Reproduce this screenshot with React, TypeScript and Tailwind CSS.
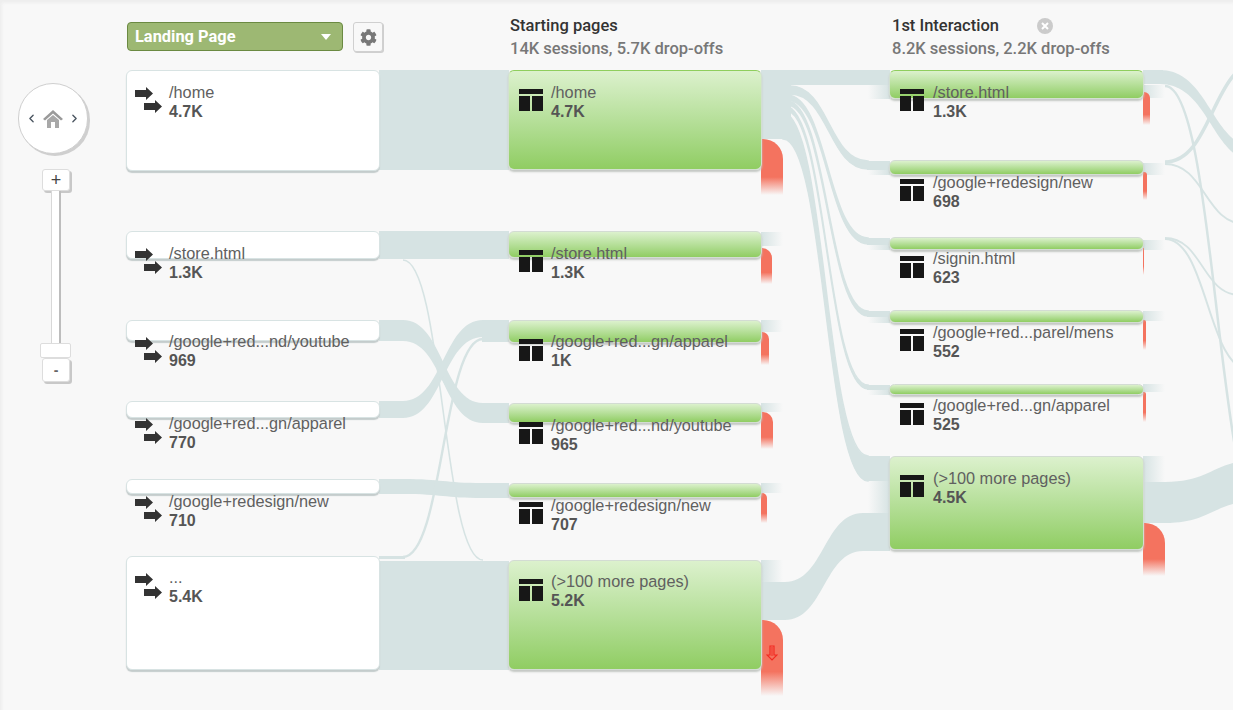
import { FaCog } from "react-icons/fa";
import { ChevronLeft, ChevronRight } from "lucide-react";

type Flow = [number, number, number, number, number, number];

interface NodeItem {
  x: number;
  y: number;
  h: number;
  label: string;
  value: string;
  lineTop?: boolean;
  dy?: number;
}

const FLOW_COLOR = "#d6e3e3";

const landing: NodeItem[] = [
  { x: 126, y: 70, h: 101, label: "/home", value: "4.7K" },
  { x: 126, y: 231, h: 28, label: "/store.html", value: "1.3K" },
  { x: 126, y: 320, h: 21, label: "/google+red...nd/youtube", value: "969", dy: -1 },
  { x: 126, y: 401, h: 17, label: "/google+red...gn/apparel", value: "770" },
  { x: 126, y: 479, h: 15, label: "/google+redesign/new", value: "710" },
  { x: 126, y: 556, h: 114, label: "...", value: "5.4K", dy: -1 },
];

const starting: NodeItem[] = [
  { x: 508, y: 70, h: 100, label: "/home", value: "4.7K", lineTop: true },
  { x: 508, y: 231, h: 27, label: "/store.html", value: "1.3K" },
  { x: 508, y: 320, h: 23, label: "/google+red...gn/apparel", value: "1K", dy: -1 },
  { x: 508, y: 403, h: 20, label: "/google+red...nd/youtube", value: "965" },
  { x: 508, y: 483, h: 15, label: "/google+redesign/new", value: "707" },
  { x: 508, y: 560, h: 110, label: "(>100 more pages)", value: "5.2K", dy: -1 },
];

const interaction: NodeItem[] = [
  { x: 889, y: 70, h: 29, label: "/store.html", value: "1.3K", lineTop: true },
  { x: 889, y: 160, h: 15, label: "/google+redesign/new", value: "698" },
  { x: 889, y: 237, h: 13, label: "/signin.html", value: "623", dy: -1 },
  { x: 889, y: 310, h: 13, label: "/google+red...parel/mens", value: "552" },
  { x: 889, y: 384, h: 11, label: "/google+red...gn/apparel", value: "525", dy: -1 },
  { x: 889, y: 456, h: 94, label: "(>100 more pages)", value: "4.5K" },
];

// x1, y1, h1, x2, y2, h2
const bands: Flow[] = [
  [379, 70, 100, 509, 70, 100],
  [379, 231, 28, 509, 231, 28],
  [403, 320, 21, 483, 403, 20],
  [403, 401, 17, 483, 320, 17],
  [403, 479, 15, 483, 483, 15],
  [761, 70, 15, 890, 70, 15],
  [790, 86, 8, 868, 161, 8],
  [787, 95, 5, 868, 238, 6],
  [787, 101, 4, 868, 311, 5],
  [785, 106, 4, 868, 385, 4],
  [783, 113, 26, 868, 456, 25],
  [785, 582, 38, 863, 513, 38],
  [1160, 70, 14, 1262, 150, 14],
  [1165, 482, 41, 1260, 460, 41],
];

const lines: [number, number, number, number, number][] = [
  [403, 260, 483, 560, 1.6],
  [403, 557, 483, 339, 2.4],
  [1165, 86, 1268, 530, 2.5],
  [1165, 162, 1260, 62, 3.5],
  [1165, 164, 1245, 224, 2],
  [1165, 238, 1240, 295, 1.8],
  [1165, 239, 1250, 370, 2],
];

// green node drop-offs: x, y, width, height
const drops = [
  [761, 139, 22, 56, "rounded-tr-[20px]"],
  [761, 248, 11, 36, "rounded-tr-[10px]"],
  [761, 332, 8, 33, "rounded-tr-[7px]"],
  [761, 412, 12, 37, "rounded-tr-[10px]"],
  [761, 493, 6, 30, "rounded-tr-[5px]"],
  [761, 620, 22, 76, "rounded-tr-[20px]"],
  [1143, 92, 7, 33, "rounded-tr-[6px]"],
  [1143, 172, 4, 28, "rounded-tr-[3px]"],
  [1143, 248, 1, 27, ""],
  [1143, 320, 3, 30, "rounded-tr-[2px]"],
  [1143, 392, 3, 30, "rounded-tr-[2px]"],
  [1143, 523, 22, 53, "rounded-tr-[20px]"],
] as const;

// fading stubs on the exit side of a node
const exits = [
  [761, 232, 14],
  [761, 320, 12],
  [761, 403, 9],
  [761, 483, 10],
  [761, 560, 22],
  [1143, 85, 13],
  [1143, 163, 12],
  [1143, 240, 10],
  [1143, 311, 10],
  [1143, 384, 8],
  [1143, 456, 26],
];

// fading stubs on the entry side of a node
const entries = [
  [85, 14],
  [170, 5],
  [245, 5],
  [317, 6],
  [390, 5],
  [481, 32],
];

function bandPath([x1, y1, h1, x2, y2, h2]: Flow) {
  const mx = (x1 + x2) / 2;
  return `M${x1} ${y1}C${mx} ${y1} ${mx} ${y2} ${x2} ${y2}V${y2 + h2}C${mx} ${y2 + h2} ${mx} ${y1 + h1} ${x1} ${y1 + h1}Z`;
}

function ArrowsIcon() {
  return (
    <svg width="27" height="27" viewBox="0 0 27 27" className="shrink-0">
      <path d="M0 3H11V0L18 6.5L11 13V10H0Z" fill="#333" />
      <path d="M9 16H20V13L27 19.5L20 26V23H9Z" fill="#333" />
    </svg>
  );
}

function PageIcon() {
  return (
    <svg width="24" height="22" viewBox="0 0 24 22" className="shrink-0">
      <rect width="24" height="5" fill="#171717" />
      <rect y="7" width="11" height="15" fill="#171717" />
      <rect x="13" y="7" width="11" height="15" fill="#171717" />
    </svg>
  );
}

function NodeText({ node }: { node: NodeItem }) {
  return (
    <div
      className="text-[16.3px] leading-[19px] text-[#606060] whitespace-nowrap font-['Liberation_Sans',sans-serif]"
      style={{ marginTop: 12 + (node.dy ?? 0) }}
    >
      <div>{node.label}</div>
      <div className="text-[16px] font-bold text-[#555]">{node.value}</div>
    </div>
  );
}

function LandingNode({ node }: { node: NodeItem }) {
  return (
    <div
      className="absolute w-[254px] bg-white rounded-[6px] border border-[#d8e3e3] shadow-[0_2px_1px_#c4cccc]"
      style={{ left: node.x, top: node.y, height: node.h }}
    >
      <div className="flex">
        <div className="ml-[8px] mt-[16px] w-[34px]">
          <ArrowsIcon />
        </div>
        <NodeText node={node} />
      </div>
    </div>
  );
}

function GreenNode({ node }: { node: NodeItem }) {
  const last = node.x > 800;
  return (
    <div
      className={`absolute rounded-[6px] border bg-linear-to-b from-[#dcf1cd] to-[#90cd62] shadow-[0_2px_2px_#c4c8c4] ${
        last ? "w-[255px]" : "w-[254px]"
      } ${node.lineTop ? "border-[#d3e0d0] border-t-[#8fce5d]" : "border-[#d3dcd3]"}`}
      style={{ left: node.x, top: node.y, height: node.h }}
    >
      <div className="flex">
        <div className={`ml-[10px] mt-[18px] ${last ? "w-[33px]" : "w-[32px]"}`}>
          <PageIcon />
        </div>
        <NodeText node={node} />
      </div>
    </div>
  );
}

function Diagram() {
  return (
    <div className="absolute inset-0">
      <svg width="1233" height="710" className="absolute inset-0">
        {bands.map((b, i) => (
          <path key={i} d={bandPath(b)} fill={FLOW_COLOR} stroke={FLOW_COLOR} strokeWidth={i >= 6 && i <= 10 ? 1.5 : 0} />
        ))}
        <rect x="379" y="561" width="130" height="109" fill={FLOW_COLOR} />
        <rect x="379" y="320" width="25" height="21" fill={FLOW_COLOR} />
        <rect x="379" y="401" width="25" height="17" fill={FLOW_COLOR} />
        <rect x="379" y="479" width="25" height="15" fill={FLOW_COLOR} />
        <rect x="482" y="403" width="27" height="20" fill={FLOW_COLOR} />
        <rect x="482" y="320" width="27" height="17" fill={FLOW_COLOR} />
        <rect x="482" y="483" width="27" height="15" fill={FLOW_COLOR} />
        <rect x="482" y="337" width="27" height="5" fill={FLOW_COLOR} />
        <rect x="379" y="556" width="26" height="3" fill={FLOW_COLOR} />
        <rect x="761" y="85" width="30" height="54" fill={FLOW_COLOR} />
        <rect x="761" y="582" width="25" height="38" fill={FLOW_COLOR} />
        <rect x="862" y="513" width="28" height="38" fill={FLOW_COLOR} />
        <rect x="867" y="161" width="23" height="9" fill={FLOW_COLOR} />
        <rect x="867" y="238" width="23" height="7" fill={FLOW_COLOR} />
        <rect x="867" y="311" width="23" height="6" fill={FLOW_COLOR} />
        <rect x="867" y="385" width="23" height="5" fill={FLOW_COLOR} />
        <rect x="867" y="456" width="23" height="25" fill={FLOW_COLOR} />
        <rect x="1143" y="70" width="20" height="14" fill={FLOW_COLOR} />
        <rect x="1143" y="482" width="23" height="41" fill={FLOW_COLOR} />
        {lines.map(([x1, y1, x2, y2, w], i) => {
          const mx = (x1 + x2) / 2;
          return (
            <path
              key={i}
              d={`M${x1} ${y1}C${mx} ${y1} ${mx} ${y2} ${x2} ${y2}`}
              fill="none"
              stroke={FLOW_COLOR}
              strokeWidth={w}
            />
          );
        })}
      </svg>

      {exits.map(([x, y, h], i) => (
        <div
          key={i}
          className="absolute w-[22px] bg-linear-to-r from-[#d6e3e3] to-transparent"
          style={{ left: x, top: y, height: h }}
        />
      ))}
      {entries.map(([y, h], i) => (
        <div
          key={i}
          className="absolute left-[868px] w-[22px] bg-linear-to-l from-[#d6e3e3] to-transparent"
          style={{ top: y, height: h }}
        />
      ))}
      {drops.map(([x, y, w, h, round], i) => (
        <div
          key={i}
          className={`absolute bg-[linear-gradient(to_bottom,#f4735f_0%,#f4735f_68%,rgba(244,115,95,0)_100%)] ${round}`}
          style={{ left: x, top: y, width: w, height: h }}
        />
      ))}

      {landing.map((n) => (
        <LandingNode key={n.y} node={n} />
      ))}
      {starting.map((n) => (
        <GreenNode key={n.y} node={n} />
      ))}
      {interaction.map((n) => (
        <GreenNode key={n.y} node={n} />
      ))}

      <svg width="12" height="16" viewBox="0 0 12 16" className="absolute left-[766px] top-[645px]">
        <path d="M4 1H8V10H11L6 15L1 10H4Z" fill="#f4735f" stroke="#f22a22" strokeWidth="1.2" />
        <path d="M6 2V11" stroke="#f22a22" strokeWidth="1" />
      </svg>
    </div>
  );
}

function ZoomControls() {
  return (
    <div className="relative z-10 pl-[18px] pt-[83px] w-[127px] shrink-0">
      <div className="w-[70px] h-[71px] rounded-full bg-white border border-[#cfcfcf] shadow-[2px_2px_0_#cfcfcf] flex items-center justify-center">
        <ChevronLeft size={13} strokeWidth={2.5} color="#4a5560" />
        <svg width="20" height="18" viewBox="0 0 20 18" className="mx-[5px]">
          <path d="M10 0L20 9L18 10.5L10 3.5L2 10.5L0 9Z" fill="#9a9a9a" />
          <path d="M4 10L10 5L16 10V18H12V12H8V18H4Z" fill="#a8a8a8" />
        </svg>
        <ChevronRight size={13} strokeWidth={2.5} color="#4a5560" />
      </div>
      <div className="mt-[15px] ml-[24px] w-[28px] h-[22px] bg-white rounded-[3px] border border-[#ddd] shadow-[2px_2px_0_#c8c8c8] flex items-center justify-center text-[18px] leading-none text-[#444] font-['Liberation_Sans',sans-serif]">
        +
      </div>
      <div className="ml-[33px] w-[10px] h-[152px] bg-white border-x border-l-[#d8d8d8] border-r-[#bdbdbd] border-r-2" />
      <div className="ml-[22px] w-[31px] h-[15px] bg-white rounded-[2px] border border-[#ddd]" />
      <div className="ml-[24px] w-[28px] h-[24px] bg-white rounded-[3px] border border-[#ddd] shadow-[2px_2px_0_#c8c8c8] flex items-center justify-center text-[14px] font-bold leading-none text-[#666] font-['Liberation_Sans',sans-serif]">
        -
      </div>
    </div>
  );
}

function ColumnHeader({ title, sub }: { title: string; sub: string }) {
  return (
    <div className="font-['Roboto',sans-serif] font-medium text-[16.5px] leading-[23px] whitespace-nowrap">
      <div className="text-[#333]">{title}</div>
      <div className="text-[#777]">{sub}</div>
    </div>
  );
}

function Headers() {
  return (
    <div className="relative z-10 flex h-[60px] font-['Roboto',sans-serif]">
      <div className="w-[383px] shrink-0 pt-[22px] flex items-start">
        <div className="w-[216px] h-[29px] bg-[#9db873] border border-[#6b8a42] rounded-[4px] flex items-center justify-between pl-[7px] pr-[11px] pt-px text-white text-[16.4px] font-bold">
          Landing Page
          <div className="w-0 h-0 border-x-[5px] border-x-transparent border-t-[6px] border-t-white" />
        </div>
        <div className="ml-[10px] w-[30px] h-[30px] bg-[#f8f8f8] border border-[#d0d0d0] rounded-[3px] shadow-[1px_1px_0_#cfcfcf] flex items-center justify-center">
          <FaCog size={17} color="#777" />
        </div>
      </div>
      <div className="w-[382px] shrink-0 pt-[14px]">
        <ColumnHeader title="Starting pages" sub="14K sessions, 5.7K drop-offs" />
      </div>
      <div className="relative pt-[14px]">
        <ColumnHeader title="1st Interaction" sub="8.2K sessions, 2.2K drop-offs" />
        <svg width="16" height="16" viewBox="0 0 16 16" className="absolute left-[145px] top-[18px]">
          <circle cx="8" cy="8" r="8" fill="#cbcbcb" />
          <path d="M5 5L11 11M11 5L5 11" stroke="#fff" strokeWidth="2" />
        </svg>
      </div>
    </div>
  );
}

export default function App() {
  return (
    <div className="relative w-[1233px] h-[710px] overflow-hidden bg-[#f8f8f8] shadow-[inset_2px_3px_3px_#eeeeee] flex">
      <Diagram />
      <ZoomControls />
      <div className="flex-1">
        <Headers />
      </div>
    </div>
  );
}
